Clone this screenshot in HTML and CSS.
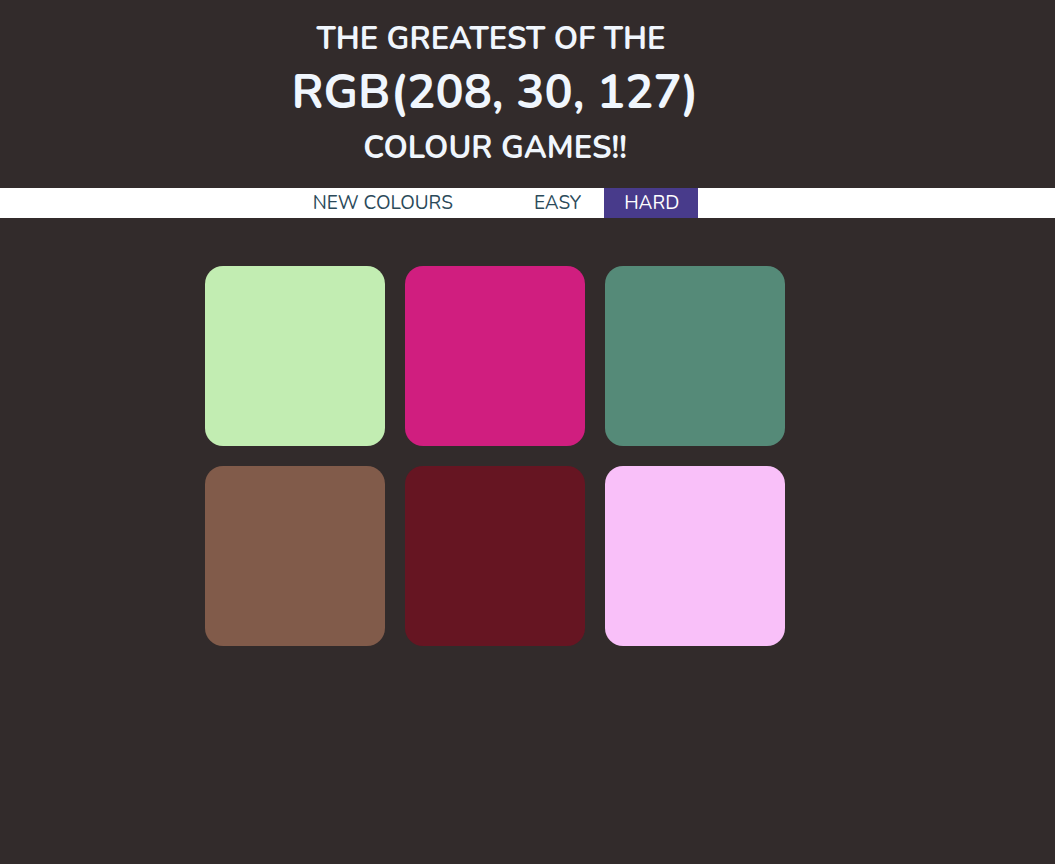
FILE: index.html
```html
<!DOCTYPE html>
<html lang="en">
<head>
<meta charset="utf-8">
<title>Colour Game</title>
<link rel="stylesheet" href="styles.css">
</head>
<body>
<header class="banner">
  <div class="col banner-inner">
    <h1 class="title">
      <span class="line-top">The Greatest of the</span>
      <span class="line-rgb">RGB(208, 30, 127)</span>
      <span class="line-bottom">Colour Games!!</span>
    </h1>
  </div>
</header>
<nav class="stripe">
  <div class="col stripe-inner">
    <button class="btn btn-reset">New Colours</button>
    <span class="message"></span>
    <button class="btn">Easy</button>
    <button class="btn btn-selected">Hard</button>
  </div>
</nav>
<main class="col">
  <div class="board">
    <div class="square sq-1"></div>
    <div class="square sq-2"></div>
    <div class="square sq-3"></div>
    <div class="square sq-4"></div>
    <div class="square sq-5"></div>
    <div class="square sq-6"></div>
  </div>
</main>
</body>
</html>
```
FILE: styles.css
```css
* { box-sizing: border-box; }
html, body {
  margin: 0;
  padding: 0;
  background: #322b2b;
  height: 100%;
}
body {
  font-family: "Nunito", "Open Sans", "Liberation Sans", sans-serif;
}
.col {
  width: 990px;
}
.banner {
  height: 188px;
}
.banner-inner {
  height: 100%;
}
.title {
  margin: 0;
  padding-top: 18px;
  display: flex;
  flex-direction: column;
  align-items: center;
  color: #f0f6fd;
  font-weight: 700;
  text-transform: uppercase;
}
.line-top {
  font-size: 31px;
  line-height: 42px;
  margin-left: -8px;
}
.line-rgb {
  font-size: 47px;
  line-height: 66px;
  font-weight: 700;
  margin-left: 0;
}
.line-bottom {
  font-size: 31px;
  line-height: 44px;
}
.stripe {
  background: #ffffff;
  height: 30px;
}
.stripe-inner {
  height: 30px;
  display: flex;
  justify-content: center;
  align-items: stretch;
}
.btn {
  border: none;
  background: #ffffff;
  color: #2b4a5a;
  font-family: inherit;
  font-size: 19px;
  text-transform: uppercase;
  padding: 0 20px;
  margin: 0;
  cursor: pointer;
  white-space: nowrap;
}
.btn-reset {
  width: 182px;
}
.message {
  width: 40px;
}
.btn + .btn {
  margin-left: 3px;
}
.btn-selected {
  background: #483b8b;
  color: #ffffff;
  width: 94px;
}
.board {
  width: 580px;
  margin: 48px auto 0;
  display: grid;
  grid-template-columns: repeat(3, 180px);
  gap: 20px;
}
.square {
  height: 180px;
  border-radius: 18px;
}
.sq-1 { background: #c2edb2; }
.sq-2 { background: #d01e7f; }
.sq-3 { background: #558a78; }
.sq-4 { background: #815b4a; }
.sq-5 { background: #661522; }
.sq-6 { background: #f9c0f9; }
```
